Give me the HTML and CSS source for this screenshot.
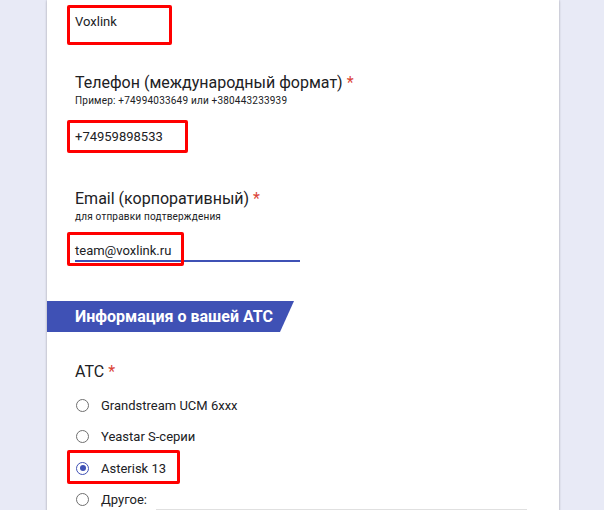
FILE: index.html
```html
<!DOCTYPE html>
<html lang="ru">
<head>
<meta charset="utf-8">
<title>Форма</title>
<link rel="stylesheet" href="styles.css">
</head>
<body>
<div class="card">
  <div class="answer first">
    <span class="value">Voxlink</span>
    <span class="mark mark-name"></span>
  </div>

  <div class="label label-phone">Телефон (международный формат) <span class="req">*</span></div>
  <div class="hint">Пример: +74994033649 или +380443233939</div>
  <div class="answer phone">
    <span class="value">+74959898533</span>
    <span class="mark mark-phone"></span>
  </div>

  <div class="label label-email">Email (корпоративный) <span class="req">*</span></div>
  <div class="hint">для отправки подтверждения</div>
  <div class="answer email">
    <span class="value">team@voxlink.ru</span>
    <span class="mark mark-email"></span>
  </div>

  <div class="section">Информация о вашей АТС</div>

  <div class="label label-pbx">АТС <span class="req">*</span></div>
  <div class="options">
    <div class="option"><span class="radio"></span><span class="opt-text">Grandstream UCM 6xxx</span></div>
    <div class="option"><span class="radio"></span><span class="opt-text">Yeastar S-серии</span></div>
    <div class="option selected"><span class="radio checked"></span><span class="opt-text">Asterisk 13</span><span class="mark mark-opt"></span></div>
    <div class="option"><span class="radio"></span><span class="opt-text">Другое:</span><span class="other-line"></span></div>
  </div>
</div>
</body>
</html>
```

FILE: styles.css
```css
* { box-sizing: border-box; }
html, body {
  margin: 0;
  padding: 0;
  background: #e8eaf6;
  height: 100%;
  overflow: hidden;
}
body {
  font-family: Roboto, "Noto Sans", Arial, sans-serif;
  color: #202124;
}
.card {
  margin-left: 47px;
  width: 512px;
  min-height: 510px;
  background: #fff;
  box-shadow: 0 0 2px rgba(0,0,0,0.22), 0 1px 3px rgba(0,0,0,0.12);
  padding-left: 28px;
  display: flex;
  flex-direction: column;
  align-items: flex-start;
}
.answer {
  position: relative;
  font-size: 13px;
  line-height: 16px;
}
.value { display: block; }
.first { margin-top: 14px; }
.phone { margin-top: 22px; }
.email {
  margin-top: 20px;
  width: 225px;
  padding-bottom: 1px;
  border-bottom: 2px solid #3f51b5;
}
.mark {
  position: absolute;
  left: -8px;
  border: 3px solid #ff0000;
  border-radius: 2px;
  pointer-events: none;
}
.mark-name { top: -9px; width: 105px; height: 40px; }
.mark-phone { top: -9px; width: 121px; height: 33px; }
.mark-email { top: -11px; width: 117px; height: 34px; }
.label {
  font-size: 16px;
  line-height: 20px;
  color: #202124;
}
.label-phone { margin-top: 43px; }
.label-email { margin-top: 44px; }
.label-pbx { margin-top: 30px; }
.req { color: #db4437; }
.hint {
  margin-top: 2px;
  font-size: 10px;
  line-height: 12px;
  letter-spacing: 0.2px;
  color: #202124;
}
.section {
  margin-top: 39px;
  margin-left: -28px;
  width: 247px;
  height: 31px;
  line-height: 31px;
  padding-left: 28px;
  background: #3f51b5;
  color: #fff;
  font-size: 16px;
  font-weight: 700;
  clip-path: polygon(0 0, 100% 0, calc(100% - 14px) 100%, 0 100%);
}
.options {
  margin-top: 7.5px;
  display: flex;
  flex-direction: column;
}
.option {
  position: relative;
  display: flex;
  align-items: center;
  height: 31.5px;
  font-size: 13px;
}
.radio {
  flex: none;
  width: 13px;
  height: 13px;
  margin-left: 1px;
  border: 1.6px solid #6f6f6f;
  border-radius: 50%;
  position: relative;
}
.radio.checked { border-color: #3f51b5; }
.radio.checked::after {
  content: "";
  position: absolute;
  left: 50%;
  top: 50%;
  width: 6px;
  height: 6px;
  margin: -3px 0 0 -3px;
  border-radius: 50%;
  background: #3f51b5;
}
.opt-text {
  margin-left: 12px;
  color: #202124;
}
.mark-opt { top: -2.5px; width: 113px; height: 34px; }
.other-line {
  align-self: flex-end;
  margin-left: 9px;
  margin-bottom: 6px;
  width: 371px;
  border-bottom: 1px solid #e0e0e0;
}
```
